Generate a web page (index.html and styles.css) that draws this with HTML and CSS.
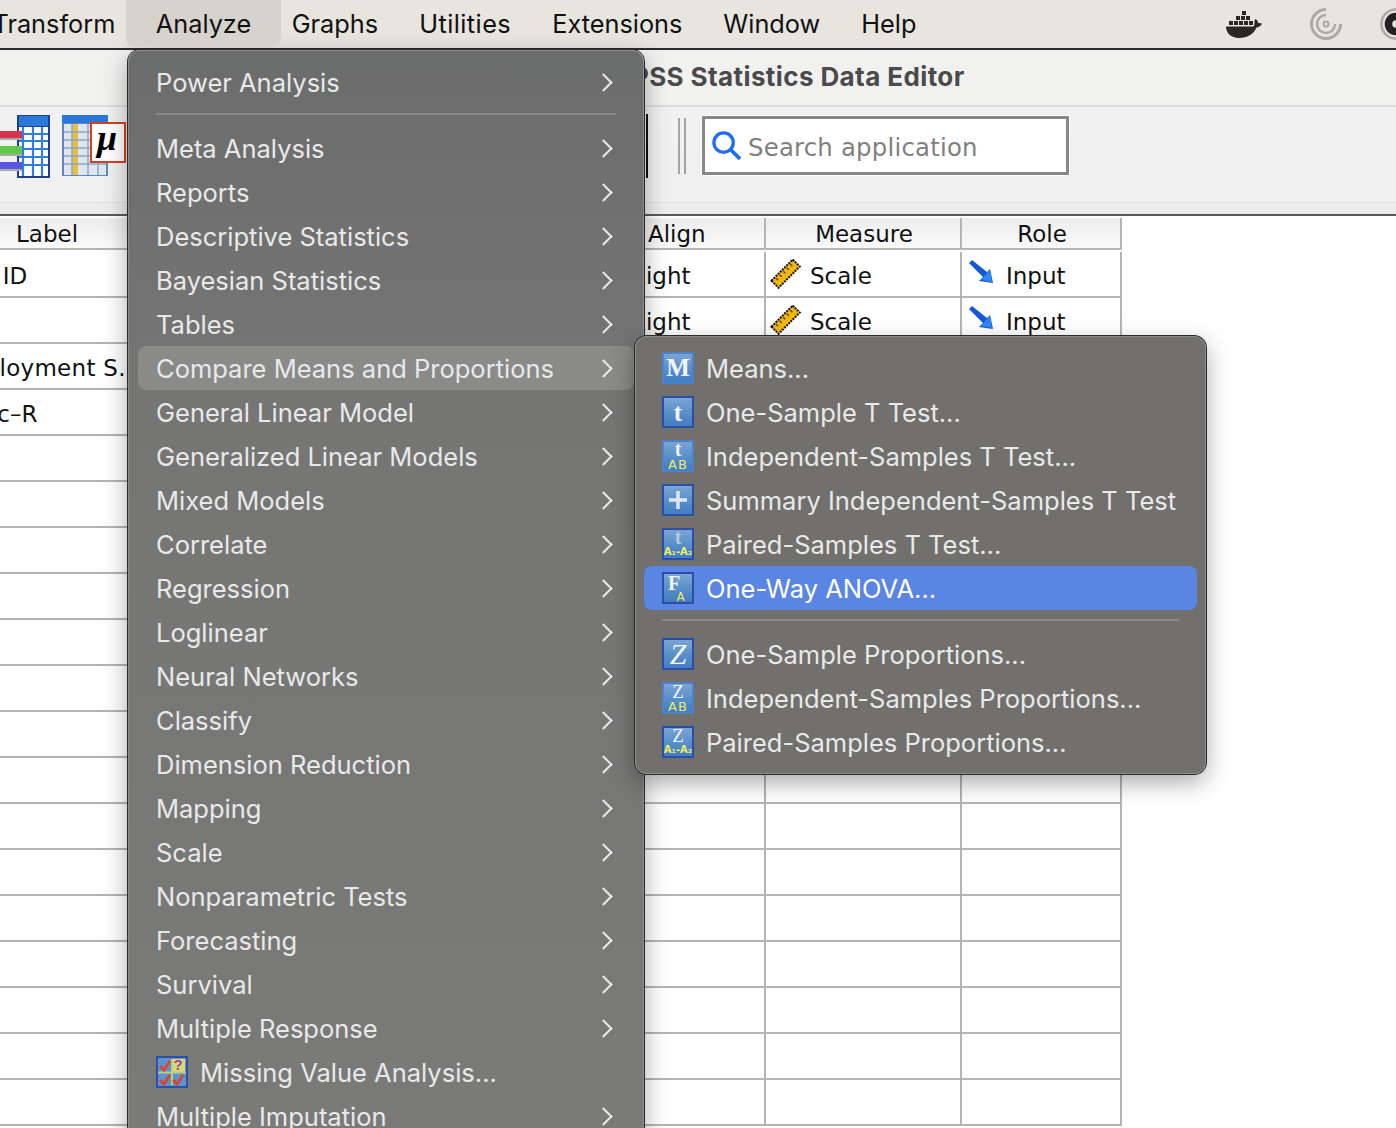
FILE: index.html
```html
<!DOCTYPE html>
<html lang="en">
<head>
<meta charset="utf-8">
<title>IBM SPSS Statistics Data Editor</title>
<link rel="stylesheet" href="styles.css">
</head>
<body>
<svg class="defs" width="0" height="0" aria-hidden="true">
  <defs>
    <linearGradient id="tile" x1="0" y1="0" x2="0" y2="1">
      <stop offset="0" stop-color="#7ea6d4"/>
      <stop offset="0.5" stop-color="#5a90ca"/>
      <stop offset="1" stop-color="#3f7cc4"/>
    </linearGradient>
    <symbol id="tile-base" viewBox="0 0 32 32">
      <rect x="1" y="1" width="30" height="30" fill="url(#tile)" stroke="#2c4ea6" stroke-width="2"/>
    </symbol>
    <symbol id="tile-soft" viewBox="0 0 32 32">
      <rect x="1" y="1" width="30" height="30" fill="url(#tile)" stroke="#4c80cb" stroke-width="2"/>
    </symbol>
    <symbol id="ruler" viewBox="0 0 32 32">
      <g transform="rotate(-45 16 16)">
        <rect x="1" y="10.500" width="30" height="10" fill="#f2b70f" stroke="#111" stroke-width="2" stroke-dasharray="2 1"/>
        <path d="M6 12v3M11 12v3M16 12v3M21 12v3M26 12v3" stroke="#5a4300" stroke-width="1.4"/>
      </g>
    </symbol>
    <symbol id="arrow" viewBox="0 0 25 24">
      <path d="M0 3 3 0 18 12 21 9 24 23 10 21 14 17Z" fill="#1557d6"/>
      <path d="M18 13 21 10 23 22 12 20Z" fill="#2f86f0"/>
    </symbol>
  </defs>
</svg>

<header class="menubar">
  <nav class="menubar-items">
    <span class="menu-title first">Transform</span>
    <span class="menu-title active">Analyze</span>
    <span class="menu-title">Graphs</span>
    <span class="menu-title wide">Utilities</span>
    <span class="menu-title">Extensions</span>
    <span class="menu-title">Window</span>
    <span class="menu-title">Help</span>
  </nav>
  <div class="status-icons">
    <svg class="docker" viewBox="0 0 36 28">
      <g fill="#2a2825">
        <rect x="16" y="1" width="4" height="4"/>
        <rect x="10" y="6" width="4" height="4"/><rect x="15" y="6" width="4" height="4"/><rect x="20" y="6" width="4" height="4"/>
        <rect x="3" y="11" width="4" height="4"/><rect x="8" y="11" width="4" height="4"/><rect x="13" y="11" width="4" height="4"/><rect x="18" y="11" width="4" height="4"/><rect x="23" y="11" width="4" height="4"/>
        <path d="M0 16.500H27C28 16.500 28.500 15 28.500 12 28.500 10.500 29 9.500 29.500 9 31 10 32 11.500 32.200 13 33.500 12.800 35 13 36 13.800 34.500 16.500 32.500 17.500 30.500 17.500 28 24 21 28 13 28 5 28 0 23 0 16.500Z"/>
      </g>
    </svg>
    <svg class="swirl" viewBox="0 0 32 32" fill="none" stroke="#aaa9a5">
      <path d="M16 1.500A14.500 14.500 0 1 0 30.500 16" stroke-width="3"/>
      <path d="M16 7A9 9 0 1 0 25 16" stroke-width="2.400"/>
      <circle cx="16" cy="16" r="2.500" stroke-width="2"/>
    </svg>
    <svg class="third" viewBox="0 0 34 34">
      <circle cx="17" cy="17" r="15.500" fill="none" stroke="#a9a8a4" stroke-width="2.500"/>
      <circle cx="17" cy="17" r="12" fill="#222"/>
      <circle cx="17" cy="17" r="4" fill="#e8e5df"/>
    </svg>
  </div>
</header>

<div class="titlebar">
  <h1 class="window-title">IBM SPSS Statistics Data Editor</h1>
</div>

<div class="toolbar">
  <svg class="tool-icon tool-split" viewBox="0 0 50 64">
    <rect x="17" y="1" width="33" height="63" fill="#1f3f8f"/>
    <rect x="19" y="2" width="29" height="10" fill="#2a78dc"/>
    <path d="M19 13h29v49H19Z" fill="#fff"/>
    <path d="M23 13v49M33 13v49M42 13v49M19 20h29M19 27h29M19 35h29M19 43h29M19 51h29" stroke="#2f7fe0" stroke-width="2.200"/>
    <rect x="0" y="17" width="22" height="7" fill="#d8334f"/>
    <rect x="0" y="24" width="22" height="2" fill="#aaa"/>
    <rect x="0" y="32" width="22" height="8" fill="#62c94a"/>
    <rect x="0" y="40" width="22" height="2" fill="#aaa"/>
    <rect x="0" y="48" width="22" height="7" fill="#5a55e0"/>
    <rect x="0" y="55" width="22" height="2" fill="#aaa"/>
  </svg>
  <svg class="tool-icon tool-means" viewBox="0 0 64 64">
    <rect x="0" y="1" width="46" height="61" fill="#5f86bb"/>
    <rect x="0" y="1" width="46" height="8" fill="#2878dc"/>
    <path d="M2 10h42v51H2Z" fill="#dfe6ef"/>
    <rect x="10" y="10" width="6" height="51" fill="#e6c13e"/>
    <path d="M2 18h42M2 26h42M2 34h42M2 42h42M2 50h42M10 10v51M26 10v51M36 10v51" stroke="#8ea6c6" stroke-width="1.500"/>
    <rect x="29" y="9" width="34" height="39" fill="#fff" stroke="#d8401c" stroke-width="2"/>
    <text class="mu" x="45" y="36">μ</text>
  </svg>
  <span class="tool-edge"></span>
  <span class="tool-sep"></span>
  <div class="search">
    <svg class="search-icon" viewBox="0 0 32 32" fill="none" stroke="#1c6ef2">
      <circle cx="13" cy="13" r="10" stroke-width="3.400"/>
      <path d="M20 20 30 30" stroke-width="3.800"/>
    </svg>
    <span class="search-text">Search application</span>
  </div>
</div>

<main class="sheet">
  <div class="grid-row head">
    <div class="cell">Label</div><div class="cell"></div><div class="cell align">Align</div><div class="cell center">Measure</div><div class="cell center">Role</div>
  </div>
  <div class="grid-row">
    <div class="cell lbl">User ID</div><div class="cell"></div><div class="cell align-val">Right</div>
    <div class="cell measure"><svg class="ruler-icon"><use href="#ruler"/></svg><span class="val">Scale</span></div>
    <div class="cell role"><svg class="arrow-icon"><use href="#arrow"/></svg><span class="val">Input</span></div>
  </div>
  <div class="grid-row">
    <div class="cell lbl"></div><div class="cell"></div><div class="cell align-val">Right</div>
    <div class="cell measure"><svg class="ruler-icon"><use href="#ruler"/></svg><span class="val">Scale</span></div>
    <div class="cell role"><svg class="arrow-icon"><use href="#arrow"/></svg><span class="val">Input</span></div>
  </div>
  <div class="grid-row"><div class="cell lbl lbl-long">Employment S..</div><div class="cell"></div><div class="cell"></div><div class="cell"></div><div class="cell"></div></div>
  <div class="grid-row"><div class="cell lbl lbl-short">Basic–R</div><div class="cell"></div><div class="cell"></div><div class="cell"></div><div class="cell"></div></div>
  <div class="grid-row"><div class="cell"></div><div class="cell"></div><div class="cell"></div><div class="cell"></div><div class="cell"></div></div>
  <div class="grid-row"><div class="cell"></div><div class="cell"></div><div class="cell"></div><div class="cell"></div><div class="cell"></div></div>
  <div class="grid-row"><div class="cell"></div><div class="cell"></div><div class="cell"></div><div class="cell"></div><div class="cell"></div></div>
  <div class="grid-row"><div class="cell"></div><div class="cell"></div><div class="cell"></div><div class="cell"></div><div class="cell"></div></div>
  <div class="grid-row"><div class="cell"></div><div class="cell"></div><div class="cell"></div><div class="cell"></div><div class="cell"></div></div>
  <div class="grid-row"><div class="cell"></div><div class="cell"></div><div class="cell"></div><div class="cell"></div><div class="cell"></div></div>
  <div class="grid-row"><div class="cell"></div><div class="cell"></div><div class="cell"></div><div class="cell"></div><div class="cell"></div></div>
  <div class="grid-row"><div class="cell"></div><div class="cell"></div><div class="cell"></div><div class="cell"></div><div class="cell"></div></div>
  <div class="grid-row"><div class="cell"></div><div class="cell"></div><div class="cell"></div><div class="cell"></div><div class="cell"></div></div>
  <div class="grid-row"><div class="cell"></div><div class="cell"></div><div class="cell"></div><div class="cell"></div><div class="cell"></div></div>
  <div class="grid-row"><div class="cell"></div><div class="cell"></div><div class="cell"></div><div class="cell"></div><div class="cell"></div></div>
  <div class="grid-row"><div class="cell"></div><div class="cell"></div><div class="cell"></div><div class="cell"></div><div class="cell"></div></div>
  <div class="grid-row"><div class="cell"></div><div class="cell"></div><div class="cell"></div><div class="cell"></div><div class="cell"></div></div>
  <div class="grid-row"><div class="cell"></div><div class="cell"></div><div class="cell"></div><div class="cell"></div><div class="cell"></div></div>
  <div class="grid-row"><div class="cell"></div><div class="cell"></div><div class="cell"></div><div class="cell"></div><div class="cell"></div></div>
</main>

<div class="menu main-menu">
  <div class="item sub">Power Analysis</div>
  <div class="sep"></div>
  <div class="item sub">Meta Analysis</div>
  <div class="item sub">Reports</div>
  <div class="item sub">Descriptive Statistics</div>
  <div class="item sub">Bayesian Statistics</div>
  <div class="item sub">Tables</div>
  <div class="item sub open">Compare Means and Proportions</div>
  <div class="item sub">General Linear Model</div>
  <div class="item sub">Generalized Linear Models</div>
  <div class="item sub">Mixed Models</div>
  <div class="item sub">Correlate</div>
  <div class="item sub">Regression</div>
  <div class="item sub">Loglinear</div>
  <div class="item sub">Neural Networks</div>
  <div class="item sub">Classify</div>
  <div class="item sub">Dimension Reduction</div>
  <div class="item sub">Mapping</div>
  <div class="item sub">Scale</div>
  <div class="item sub">Nonparametric Tests</div>
  <div class="item sub">Forecasting</div>
  <div class="item sub">Survival</div>
  <div class="item sub">Multiple Response</div>
  <div class="item with-icon">
    <svg class="mi" viewBox="0 0 32 32">
      <rect x="1" y="1" width="30" height="30" fill="#5f93cf" stroke="#2c4ea6" stroke-width="2"/>
      <rect x="16" y="3" width="13" height="13" fill="#d9d873"/>
      <path d="M2 16.500H30M16 3V29" stroke="#b7d27a" stroke-width="2"/>
      <path d="M4 10 8 14 14 5M4 24 8 28 14 19M17 24 21 28 27 19" fill="none" stroke="#d9452b" stroke-width="3"/>
      <text class="q" x="22" y="14">?</text>
    </svg>
    Missing Value Analysis...
  </div>
  <div class="item sub">Multiple Imputation</div>
</div>

<div class="menu sub-menu">
  <div class="item with-icon">
    <svg class="mi" viewBox="0 0 32 32"><use href="#tile-soft"/><text class="glyph big" x="16" y="24">M</text></svg>Means...
  </div>
  <div class="item with-icon">
    <svg class="mi" viewBox="0 0 32 32"><use href="#tile-base"/><text class="glyph big" x="16" y="25">t</text></svg>One-Sample T Test...
  </div>
  <div class="item with-icon">
    <svg class="mi" viewBox="0 0 32 32"><use href="#tile-soft"/><text class="glyph mid" x="16" y="16">t</text><text class="yellow" x="16" y="29">AB</text></svg>Independent-Samples T Test...
  </div>
  <div class="item with-icon">
    <svg class="mi" viewBox="0 0 32 32"><use href="#tile-base"/><path d="M16 7V25M7 16H25" stroke="#dfe7f2" stroke-width="3.500"/></svg>Summary Independent-Samples T Test
  </div>
  <div class="item with-icon">
    <svg class="mi" viewBox="0 0 32 32"><use href="#tile-base"/><text class="glyph mid dim" x="16" y="16">t</text><text class="yellow tiny" x="16" y="27">A₁-A₂</text></svg>Paired-Samples T Test...
  </div>
  <div class="item with-icon selected">
    <svg class="mi" viewBox="0 0 32 32"><use href="#tile-base"/><text class="glyph mid" x="12" y="18">F</text><text class="yellow small" x="19" y="29">A</text></svg>One-Way ANOVA...
  </div>
  <div class="sep"></div>
  <div class="item with-icon">
    <svg class="mi" viewBox="0 0 32 32"><use href="#tile-base"/><text class="glyph z" x="16" y="26">Z</text></svg>One-Sample Proportions...
  </div>
  <div class="item with-icon">
    <svg class="mi" viewBox="0 0 32 32"><use href="#tile-soft"/><text class="glyph zm" x="16" y="16">Z</text><text class="yellow" x="16" y="29">AB</text></svg>Independent-Samples Proportions...
  </div>
  <div class="item with-icon">
    <svg class="mi" viewBox="0 0 32 32"><use href="#tile-base"/><text class="glyph zm" x="16" y="16">Z</text><text class="yellow tiny" x="16" y="27">A₁-A₂</text></svg>Paired-Samples Proportions...
  </div>
</div>
</body>
</html>
```
FILE: styles.css
```css
* { box-sizing: border-box; }
html, body { margin: 0; padding: 0; }
body {
  width: 1396px;
  height: 1128px;
  overflow: hidden;
  position: relative;
  background: #fff;
  font-family: "Inter", "Liberation Sans", sans-serif;
}
.defs { display: block; height: 0; }

/* menu bar */
.menubar {
  height: 50px;
  display: flex;
  justify-content: space-between;
  background: #e8e5df;
  border-bottom: 2px solid #2b2b2b;
  color: #111;
  font-size: 25.300px;
  overflow: hidden;
}
.menubar-items { display: flex; margin-left: -28px; }
.menu-title {
  height: 46px;
  padding: 0 20.500px;
  display: flex;
  align-items: center;
}
.menu-title.wide { letter-spacing: 0.450px; }
.menu-title.active {
  background: #d6d3cc;
  border-radius: 0 0 8px 8px;
  height: 47px;
  padding: 0 30px 1px;
  margin: 0 -10px;
  z-index: 1;
}
.status-icons { display: flex; align-items: center; gap: 48px; margin-right: -16px; }
.docker { width: 36px; height: 28px; }
.swirl { width: 32px; height: 32px; }
.third { width: 32px; height: 32px; margin-left: -10px; }

/* title bar */
.titlebar {
  height: 57px;
  background: #f1f1f0;
  border-bottom: 2px solid #dcdcdc;
  display: flex;
  align-items: center;
  padding-left: 558px;
}
.window-title {
  margin: 0 0 2px;
  font-size: 26px;
  letter-spacing: 0.400px;
  font-weight: 700;
  color: #4a4a4a;
}

/* toolbar */
.toolbar {
  height: 109px;
  background: linear-gradient(#f1f1f1 0, #f0f0f0 95px, #e2e2e2 95px, #e2e2e2 96px, #ededed 96px);
  border-bottom: 2px solid #5a5a5a;
  display: flex;
  align-items: flex-start;
  padding-top: 7px;
  position: relative;
}
.tool-icon { height: 64px; display: block; flex: none; }
.tool-split { width: 50px; }
.tool-means { width: 64px; margin-left: 12px; }
.mu { font: italic 700 36px "Liberation Serif", serif; text-anchor: middle; fill: #000; }
.tool-edge {
  width: 2px;
  height: 64px;
  background: #111;
  margin-left: 520px;
  flex: none;
}
.tool-sep {
  width: 8px;
  height: 56px;
  margin: 4px 0 0 30px;
  border-left: 2px solid #a4a4a4;
  border-right: 2px solid #a4a4a4;
  flex: none;
}
.search {
  width: 367px;
  height: 59px;
  margin: 2px 0 0 16px;
  background: #fff;
  border: 3px solid #888;
  outline: 1px solid #fff;
  display: flex;
  align-items: center;
  padding-left: 6px;
  gap: 6px;
  flex: none;
}
.search-icon { width: 31px; height: 31px; flex: none; }
.search-text {
  font: 24.400px "DejaVu Sans", sans-serif;
  color: #808080;
  letter-spacing: 0.200px;
  padding-top: 4px;
}

/* data grid */
.sheet {
  margin-left: -57px;
  width: 1179px;
  padding-top: 2px;
  font: 23px "DejaVu Sans", sans-serif;
  color: #111;
}
.grid-row {
  display: grid;
  grid-template-columns: 210px 436px 177px 196px 160px;
  height: 46px;
}
.grid-row.head {
  height: 34px;
}
.cell {
  border-right: 2px solid #b4b4b4;
  border-bottom: 2px solid #b4b4b4;
  display: flex;
  align-items: center;
  white-space: nowrap;
  overflow: hidden;
  padding-top: 3px;
}
.head .cell {
  background: linear-gradient(#ededed, #fafafa);
  justify-content: center;
  height: 32px;
  padding-top: 1px;
}
.head .cell.center { padding-left: 2px; }
.head .align { justify-content: flex-start; padding-left: 59px; }
.lbl-long { padding-left: 4px; letter-spacing: 0.300px; }
.lbl-short { padding-left: 6px; }
.align-val { padding-left: 41px; }
.measure { padding-left: 4px; gap: 8px; }
.role { padding-left: 7px; gap: 12px; }
.ruler-icon { width: 32px; height: 32px; flex: none; margin-top: -3px; }
.arrow-icon { width: 25px; height: 24px; flex: none; margin-top: -7px; }

/* menus */
.menu {
  position: absolute;
  color: #e9e9e9;
  border-radius: 12px;
  font-size: 25.500px;
  box-shadow: 0 0 0 1px #2a2a2a, inset 0 0 0 1px #8d8d8d, 0 8px 24px rgba(0, 0, 0, .35);
}
.main-menu {
  left: 128px;
  top: 50px;
  width: 516px;
  height: 1100px;
  padding: 10px;
  background: linear-gradient(180deg, #6b6c6c 0, #757574 30%, #7a7a79 100%);
}
.sub-menu {
  left: 635px;
  top: 336px;
  width: 571px;
  height: 438px;
  padding: 10px 9px;
  background: #71706d;
}
.item {
  height: 44px;
  display: flex;
  align-items: center;
  padding: 0 18px;
  border-radius: 8px;
  white-space: nowrap;
  position: relative;
}
.sub::after {
  content: "";
  position: absolute;
  right: 24px;
  top: 16px;
  width: 11px;
  height: 11px;
  border-top: 2.500px solid #e9e9e9;
  border-right: 2.500px solid #e9e9e9;
  transform: rotate(45deg);
}
.open { background: #8a8a89; }
.selected { background: #5b85e3; color: #fff; }
.sep {
  height: 22px;
  margin: 0 18px;
  position: relative;
}
.sep::before {
  content: "";
  position: absolute;
  left: 0;
  right: 0;
  top: 9px;
  height: 2px;
  background: #8a8987;
}
.with-icon { gap: 12px; }
.mi { width: 32px; height: 32px; flex: none; }
.glyph {
  font: 700 22px "Liberation Serif", serif;
  text-anchor: middle;
  fill: #f2f5fa;
}
.glyph.big { font-size: 25px; font-family: "Liberation Serif", serif; }
.glyph.mid { font-size: 20px; font-family: "Liberation Serif", serif; }
.glyph.dim { fill: #b9c6d8; }
.glyph.z { font-size: 30px; font-weight: 400; font-family: "Liberation Serif", serif; font-style: italic; }
.glyph.zm { font-size: 19px; font-weight: 400; font-family: "Liberation Serif", serif; }
.yellow {
  font: 400 13px "DejaVu Sans", sans-serif;
  text-anchor: middle;
  fill: #f1ef5a;
  letter-spacing: 1px;
}
.yellow.tiny { font-size: 10px; letter-spacing: 0; font-weight: 700; }
.yellow.small { font-size: 12px; }
.q { font: 700 15px "Liberation Sans", sans-serif; text-anchor: middle; fill: #a63fa8; }
```
